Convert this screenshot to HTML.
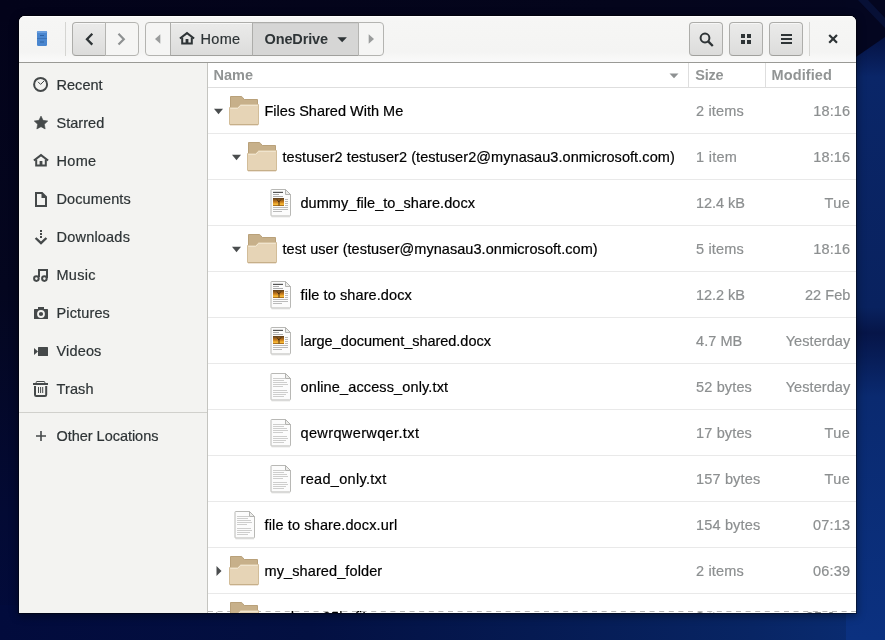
<!DOCTYPE html>
<html lang="en"><head><meta charset="utf-8"><title>OneDrive</title>
<style>
html,body{margin:0;padding:0;}
body{width:885px;height:640px;overflow:hidden;position:relative;background:#05061e;font-family:"Liberation Sans",sans-serif;font-size:14.5px;color:#2e3436;}
#bg{position:absolute;left:0;top:0;width:885px;height:640px;}
#win{will-change:transform;position:absolute;left:19px;top:16px;width:837px;height:597px;border-radius:6px 6px 0 0;overflow:hidden;background:#fff;
 box-shadow:0 0 0 1px rgba(0,0,0,.4),0 2px 8px 1px rgba(0,0,0,.4);}
#hdr{position:absolute;left:0;top:0;width:837px;height:46px;background:linear-gradient(to bottom,#f6f6f5 0%,#f4f4f3 78%,#fafafa 100%);border-bottom:1px solid #9a9a96;box-shadow:inset 0 1px #fff;}
#side{position:absolute;left:0;top:47px;width:188px;height:550px;background:#f3f3f1;border-right:1px solid #c4c4c0;}
#main{position:absolute;left:189px;top:47px;width:648px;height:550px;background:#fff;}
.t{position:absolute;white-space:pre;line-height:20px;height:20px;-webkit-text-stroke:.2px;}
.btn{position:absolute;top:6px;height:32px;border:1px solid #adadaa;border-bottom-color:#a0a09d;border-radius:4px;background:linear-gradient(to bottom,#ebebea,#dcdcdb);box-shadow:inset 0 1px rgba(255,255,255,.6);}
.flat{background:#f5f5f4;border-color:#b4b4b1;box-shadow:none;}
.act{background:#d6d6d5;box-shadow:inset 0 1px rgba(0,0,0,.04);}
.row{position:absolute;left:0;width:648px;height:45px;border-bottom:1px solid #e9e9e9;}
svg{position:absolute;left:0;top:0;overflow:visible;}
</style></head><body>

<svg id="bg" width="885" height="640" viewBox="0 0 885 640">
<defs>
<linearGradient id="gl" x1="0" y1="0" x2="0" y2="1"><stop offset="0" stop-color="#03031a"/><stop offset=".45" stop-color="#04061f"/><stop offset=".8" stop-color="#030a34"/><stop offset="1" stop-color="#020b3c"/></linearGradient>
<linearGradient id="g1" x1="0" y1="0" x2="0" y2="1"><stop offset="0" stop-color="#03051c"/><stop offset=".07" stop-color="#06164a"/><stop offset=".12" stop-color="#0a2668"/><stop offset=".48" stop-color="#09225f"/><stop offset=".52" stop-color="#061548"/><stop offset=".62" stop-color="#0a2a70"/><stop offset="1" stop-color="#0b3180"/></linearGradient>
<linearGradient id="g2" x1="0" y1="0" x2="1" y2="0"><stop offset="0" stop-color="#020b3c"/><stop offset=".35" stop-color="#031042"/><stop offset=".6" stop-color="#051a52"/><stop offset=".85" stop-color="#082564"/><stop offset="1" stop-color="#0a2d74"/></linearGradient>
<linearGradient id="gt" x1="0" y1="0" x2="1" y2="0"><stop offset="0" stop-color="#03031a"/><stop offset=".7" stop-color="#04051c"/><stop offset="1" stop-color="#040620"/></linearGradient>
</defs>
<rect width="885" height="640" fill="#04061f"/>
<rect x="0" y="0" width="30" height="640" fill="url(#gl)"/>
<rect x="0" y="605" width="885" height="35" fill="url(#g2)"/>
<rect x="846" y="0" width="39" height="640" fill="url(#g1)"/>
<rect x="0" y="0" width="885" height="22" fill="url(#gt)"/>
<polygon points="846,0 885,0 885,37 856,57 846,57" fill="#040620"/>
<polygon points="858,0 868,0 885,18 885,28" fill="#0a1c52" opacity=".45"/>
</svg>

<div id="win"><div id="hdr">
<div class="btn " style="left:53px;width:32px;border-radius:4px 0 0 4px;"></div>
<div class="btn flat" style="left:86px;width:32px;border-radius:0 4px 4px 0;"></div>
<div class="btn flat" style="left:126px;width:24px;border-radius:4px 0 0 4px;"></div>
<div class="btn " style="left:151px;width:81px;border-radius:0;"></div>
<div class="btn act" style="left:233px;width:105px;border-radius:0;"></div>
<div class="btn flat" style="left:339px;width:24px;border-radius:0 4px 4px 0;"></div>
<div class="btn " style="left:670px;width:32px;"></div>
<div class="btn " style="left:710px;width:32px;"></div>
<div class="btn " style="left:750px;width:32px;"></div>
<div style="position:absolute;left:46px;top:6px;width:1px;height:34px;background:#d5d5d2"></div>
<div style="position:absolute;left:790px;top:6px;width:1px;height:34px;background:#d5d5d2"></div>
<div class="t" style="top:13px;letter-spacing:0.303px;left:181.5px;">Home</div>
<div class="t" style="top:13px;letter-spacing:-0.123px;left:245.5px;font-weight:700;-webkit-text-stroke:0;">OneDrive</div>
</div>
<div id="side">
<div class="t" style="top:12px;letter-spacing:0.041px;left:37.5px;">Recent</div>
<div class="t" style="top:50px;letter-spacing:0.034px;left:37.5px;">Starred</div>
<div class="t" style="top:88px;letter-spacing:0.303px;left:37.5px;">Home</div>
<div class="t" style="top:126px;letter-spacing:0.106px;left:37.5px;">Documents</div>
<div class="t" style="top:164px;letter-spacing:0.206px;left:37.5px;">Downloads</div>
<div class="t" style="top:202px;letter-spacing:0.265px;left:37.5px;">Music</div>
<div class="t" style="top:240px;letter-spacing:0.139px;left:37.5px;">Pictures</div>
<div class="t" style="top:278px;letter-spacing:0.154px;left:37.5px;">Videos</div>
<div class="t" style="top:316px;letter-spacing:0.134px;left:37.5px;">Trash</div>
<div style="position:absolute;left:0;top:349px;width:188px;height:1px;background:#d0d0cc"></div>
<div class="t" style="top:363px;letter-spacing:-0.032px;left:37.5px;">Other Locations</div>
</div>
<div id="main">
<div style="position:absolute;left:0;top:0;width:648px;height:24px;border-bottom:1px solid #dedede;background:#fff"></div>
<div style="position:absolute;left:480px;top:0;width:1px;height:24px;background:#dedede"></div>
<div style="position:absolute;left:557px;top:0;width:1px;height:24px;background:#dedede"></div>
<div class="t" style="top:2px;letter-spacing:0.025px;left:5.5px;font-weight:700;-webkit-text-stroke:0;color:#919494;">Name</div>
<div class="t" style="top:2px;letter-spacing:-0.179px;left:487.20000000000005px;font-weight:700;-webkit-text-stroke:0;color:#919494;">Size</div>
<div class="t" style="top:2px;letter-spacing:0.111px;left:563.5px;font-weight:700;-webkit-text-stroke:0;color:#919494;">Modified</div>
<div class="row" style="top:25px"></div>
<div class="t" style="top:38px;letter-spacing:0.005px;left:56.5px;color:#000;">Files Shared With Me</div>
<div class="t" style="top:38px;letter-spacing:0.136px;left:488.1px;color:#8c8f90;">2 items</div>
<div class="t" style="top:38px;letter-spacing:0.161px;right:5.7000000000000455px;color:#8c8f90;">18:16</div>
<div class="row" style="top:71px"></div>
<div class="t" style="top:84px;letter-spacing:0.065px;left:74.5px;color:#000;">testuser2 testuser2 (testuser2@mynasau3.onmicrosoft.com)</div>
<div class="t" style="top:84px;letter-spacing:0.25px;left:488.1px;color:#8c8f90;">1 item</div>
<div class="t" style="top:84px;letter-spacing:0.161px;right:5.7000000000000455px;color:#8c8f90;">18:16</div>
<div class="row" style="top:117px"></div>
<div class="t" style="top:130px;letter-spacing:0.05px;left:92.5px;color:#000;">dummy_file_to_share.docx</div>
<div class="t" style="top:130px;letter-spacing:-0.053px;left:488.1px;color:#8c8f90;">12.4 kB</div>
<div class="t" style="top:130px;letter-spacing:0.416px;right:5.7000000000000455px;color:#8c8f90;">Tue</div>
<div class="row" style="top:163px"></div>
<div class="t" style="top:176px;letter-spacing:0.051px;left:74.5px;color:#000;">test user (testuser@mynasau3.onmicrosoft.com)</div>
<div class="t" style="top:176px;letter-spacing:0.136px;left:488.1px;color:#8c8f90;">5 items</div>
<div class="t" style="top:176px;letter-spacing:0.161px;right:5.7000000000000455px;color:#8c8f90;">18:16</div>
<div class="row" style="top:209px"></div>
<div class="t" style="top:222px;letter-spacing:0.099px;left:92.5px;color:#000;">file to share.docx</div>
<div class="t" style="top:222px;letter-spacing:-0.053px;left:488.1px;color:#8c8f90;">12.2 kB</div>
<div class="t" style="top:222px;letter-spacing:0.024px;right:5.7000000000000455px;color:#8c8f90;">22 Feb</div>
<div class="row" style="top:255px"></div>
<div class="t" style="top:268px;letter-spacing:-0.025px;left:92.5px;color:#000;">large_document_shared.docx</div>
<div class="t" style="top:268px;letter-spacing:0.044px;left:488.1px;color:#8c8f90;">4.7 MB</div>
<div class="t" style="top:268px;letter-spacing:0.081px;right:5.7000000000000455px;color:#8c8f90;">Yesterday</div>
<div class="row" style="top:301px"></div>
<div class="t" style="top:314px;letter-spacing:0.131px;left:92.5px;color:#000;">online_access_only.txt</div>
<div class="t" style="top:314px;letter-spacing:0.134px;left:488.1px;color:#8c8f90;">52 bytes</div>
<div class="t" style="top:314px;letter-spacing:0.081px;right:5.7000000000000455px;color:#8c8f90;">Yesterday</div>
<div class="row" style="top:347px"></div>
<div class="t" style="top:360px;letter-spacing:0.373px;left:92.5px;color:#000;">qewrqwerwqer.txt</div>
<div class="t" style="top:360px;letter-spacing:0.134px;left:488.1px;color:#8c8f90;">17 bytes</div>
<div class="t" style="top:360px;letter-spacing:0.416px;right:5.7000000000000455px;color:#8c8f90;">Tue</div>
<div class="row" style="top:393px"></div>
<div class="t" style="top:406px;letter-spacing:0.311px;left:92.5px;color:#000;">read_only.txt</div>
<div class="t" style="top:406px;letter-spacing:0.145px;left:488.1px;color:#8c8f90;">157 bytes</div>
<div class="t" style="top:406px;letter-spacing:0.416px;right:5.7000000000000455px;color:#8c8f90;">Tue</div>
<div class="row" style="top:439px"></div>
<div class="t" style="top:452px;letter-spacing:0.138px;left:56.5px;color:#000;">file to share.docx.url</div>
<div class="t" style="top:452px;letter-spacing:0.145px;left:488.1px;color:#8c8f90;">154 bytes</div>
<div class="t" style="top:452px;letter-spacing:0.221px;right:5.7000000000000455px;color:#8c8f90;">07:13</div>
<div class="row" style="top:485px"></div>
<div class="t" style="top:498px;letter-spacing:0.108px;left:56.5px;color:#000;">my_shared_folder</div>
<div class="t" style="top:498px;letter-spacing:0.136px;left:488.1px;color:#8c8f90;">2 items</div>
<div class="t" style="top:498px;letter-spacing:0.221px;right:5.7000000000000455px;color:#8c8f90;">06:39</div>
<div class="row" style="top:531px"></div>
<div class="t" style="top:544px;letter-spacing:0.158px;left:56.5px;color:#000;">random_25k_files</div>
<div class="t" style="top:544px;letter-spacing:0.136px;left:488.1px;color:#8c8f90;">3 items</div>
<div class="t" style="top:544px;letter-spacing:0.159px;right:5.7000000000000455px;color:#8c8f90;">25 Jan</div>
<svg width="648" height="1" style="left:0;top:548px"><line x1="0" y1=".5" x2="648" y2=".5" stroke="#b9b9b9" stroke-width="1" stroke-dasharray="5 4.6"/></svg>
</div>
<svg width="837" height="597" viewBox="19 16 837 597">
<defs><linearGradient id="sun" x1="0" y1="0" x2="0" y2="1"><stop offset="0" stop-color="#5a3c1c"/><stop offset=".5" stop-color="#c97c1c"/><stop offset=".8" stop-color="#fbbf3a"/><stop offset="1" stop-color="#8a4f12"/></linearGradient></defs>
<g><rect x="37" y="31" width="10" height="15" rx="1.2" fill="#4a86cf"/><rect x="37" y="31" width="10" height="2" rx="1" fill="#6a9ede"/><rect x="37" y="38" width="10" height="1" fill="#3b73b8"/><rect x="40" y="35" width="4" height="1" fill="#2f62a3"/><rect x="40" y="41.5" width="4" height="1" fill="#2f62a3"/></g>
<path d="M92.3 33.8 L87 39.2 L92.3 44.6" fill="none" stroke="#2e3436" stroke-width="2.3"/>
<path d="M118.5 33.8 L123.8 39.2 L118.5 44.6" fill="none" stroke="#8e9192" stroke-width="2.2"/>
<path d="M160.3 34.3 L160.3 43.8 L155 39 Z" fill="#9a9c9c"/>
<path d="M368.7 34.3 L368.7 43.8 L374 39 Z" fill="#9a9c9c"/>
<g transform="translate(179,31)" fill="none" stroke="#2e3436" stroke-width="2"><path d="M0.9 7.5 L8 2.1 L15.1 7.5" stroke-linejoin="miter"/><path d="M3.2 6.6 L3.2 12.6 L12.8 12.6 L12.8 6.6"/><rect x="6.6" y="8" width="2.8" height="4.6" fill="#2e3436" stroke="none"/></g>
<path d="M337.4 37.2 L346.9 37.2 L342.15 42.2 Z" fill="#2e3436"/>
<circle cx="705" cy="38" r="4.4" fill="none" stroke="#2e3436" stroke-width="2"/><path d="M708.2 41.4 L712.8 46" stroke="#2e3436" stroke-width="2.4"/>
<rect x="741" y="34" width="4" height="4" fill="#2e3436"/>
<rect x="741" y="40" width="4" height="4" fill="#2e3436"/>
<rect x="747" y="34" width="4" height="4" fill="#2e3436"/>
<rect x="747" y="40" width="4" height="4" fill="#2e3436"/>
<rect x="781" y="34" width="11" height="2" fill="#2e3436"/>
<rect x="781" y="38" width="11" height="2" fill="#2e3436"/>
<rect x="781" y="42" width="11" height="2" fill="#2e3436"/>
<path d="M829.2 35 L837 42.8 M837 35 L829.2 42.8" stroke="#2e3436" stroke-width="2.2"/>
<path d="M669.5 73.5 L678.5 73.5 L674 78.3 Z" fill="#8e9192"/>
<circle cx="40.6" cy="84.4" r="6.5" fill="none" stroke="#45494a" stroke-width="2"/><path d="M38 81.8 L40.6 84.4 L44 81" fill="none" stroke="#45494a" stroke-width="1"/>
<polygon points="41.00,116.10 43.06,120.37 47.75,121.01 44.33,124.28 45.17,128.94 41.00,126.70 36.83,128.94 37.67,124.28 34.25,121.01 38.94,120.37" fill="#45494a" stroke="#45494a" stroke-width=".6" stroke-linejoin="round"/>
<g transform="translate(33,153)" fill="none" stroke="#45494a" stroke-width="2"><path d="M0.9 7.5 L8 2.1 L15.1 7.5" stroke-linejoin="miter"/><path d="M3.2 6.6 L3.2 12.6 L12.8 12.6 L12.8 6.6"/><rect x="6.6" y="8" width="2.8" height="4.6" fill="#45494a" stroke="none"/></g>
<path d="M36 193 L42 193 L46 197 L46 206 L36 206 Z" fill="none" stroke="#45494a" stroke-width="2"/><path d="M41.5 192.5 L41.5 198 L47 198 Z" fill="#45494a"/>
<rect x="40" y="230" width="2" height="2" fill="#45494a"/>
<rect x="40" y="233" width="2" height="2" fill="#45494a"/>
<rect x="40" y="236" width="2" height="2" fill="#45494a"/>
<path d="M35.6 238 L41 243.2 L46.4 238" fill="none" stroke="#45494a" stroke-width="2.4"/>
<path d="M39 277 L39 270 L47 270 L47 278" fill="none" stroke="#45494a" stroke-width="2"/><circle cx="36.4" cy="278.6" r="2.3" fill="none" stroke="#45494a" stroke-width="2"/><circle cx="44.4" cy="278.6" r="2.3" fill="none" stroke="#45494a" stroke-width="2"/>
<rect x="34" y="309" width="14" height="10" rx=".6" fill="#45494a"/><rect x="38" y="307" width="6" height="3" fill="#45494a"/><circle cx="41" cy="314" r="3" fill="#45494a" stroke="#f3f3f1" stroke-width="1.8"/>
<rect x="38" y="347" width="10" height="9" rx=".5" fill="#45494a"/><path d="M34 348 L38 351.5 L34 355 Z" fill="#45494a"/>
<rect x="33" y="383" width="15" height="2" fill="#45494a"/><path d="M36.2 383 L36.2 382.3 Q36.2 381.5 37 381.5 L44 381.5 Q44.8 381.5 44.8 382.3 L44.8 383" fill="none" stroke="#45494a" stroke-width="1"/><path d="M35 386 L35 394.8 Q35 396 36.2 396 L45 396 Q46.2 396 46.2 394.8 L46.2 386" fill="none" stroke="#45494a" stroke-width="2"/><path d="M38.5 387 V393 M40.6 387 V393 M42.7 387 V393" stroke="#45494a" stroke-width="1"/>
<path d="M36 436 H46 M41 431 V441" stroke="#45494a" stroke-width="1.6"/>
<g transform="translate(228,94)"><path d="M2.5 2.5 L13 2.5 Q14 2.5 14.6 3.4 L16.2 5.5 L29.5 5.5 L29.5 20 L2.5 20 Z" fill="#c7b08a" stroke="#b9a17a" stroke-width="1"/><path d="M1.5 13.5 L9.5 13.5 L12.5 10.5 L30.5 10.5 L30.5 30 Q30.5 30.8 29.7 30.8 L2.3 30.8 Q1.5 30.8 1.5 30 Z" fill="#e6d4b6" stroke="#d2bd99" stroke-width="1"/><path d="M2.2 14.3 L9.8 14.3 L12.8 11.3 L29.8 11.3" fill="none" stroke="#f3e8d4" stroke-width="1"/><path d="M2 30.6 L30 30.6" stroke="#c4ad86" stroke-width="1"/></g>
<path d="M214.0 108.7 L223.0 108.7 L218.5 114.3 Z" fill="#4a4d4e"/>
<g transform="translate(246,140)"><path d="M2.5 2.5 L13 2.5 Q14 2.5 14.6 3.4 L16.2 5.5 L29.5 5.5 L29.5 20 L2.5 20 Z" fill="#c7b08a" stroke="#b9a17a" stroke-width="1"/><path d="M1.5 13.5 L9.5 13.5 L12.5 10.5 L30.5 10.5 L30.5 30 Q30.5 30.8 29.7 30.8 L2.3 30.8 Q1.5 30.8 1.5 30 Z" fill="#e6d4b6" stroke="#d2bd99" stroke-width="1"/><path d="M2.2 14.3 L9.8 14.3 L12.8 11.3 L29.8 11.3" fill="none" stroke="#f3e8d4" stroke-width="1"/><path d="M2 30.6 L30 30.6" stroke="#c4ad86" stroke-width="1"/></g>
<path d="M232.0 154.7 L241.0 154.7 L236.5 160.3 Z" fill="#4a4d4e"/>
<g transform="translate(270,189)"><path d="M1 1.2 Q1 .5 1.7 .5 L15.5 .5 L20.5 5.5 L20.5 26.3 Q20.5 27 19.8 27 L1.7 27 Q1 27 1 26.3 Z" fill="#fcfcfc" stroke="#b8b8b5" stroke-width="1"/><path d="M15.5 .5 L15.5 5.5 L20.5 5.5 Z" fill="#ececea" stroke="#b3b3b0" stroke-width="1" stroke-linejoin="round"/><path d="M1.5 27.8 H20" stroke="#d9d9d7" stroke-width="1"/><rect x="3" y="2.8" width="10" height="1.2" fill="#555"/><rect x="3" y="5" width="6" height=".8" fill="#999"/><rect x="3" y="7" width="10" height=".8" fill="#999"/><rect x="3" y="9" width="11" height="8" fill="url(#sun)"/><path d="M9 16.5 L9 12 M9 13 L7 10.5 M9 12.5 L11 10.5" stroke="#3a2510" stroke-width=".9" fill="none"/><rect x="15" y="10" width="3" height=".8" fill="#aaa"/><rect x="15" y="12" width="3" height=".8" fill="#aaa"/><rect x="15" y="14" width="3" height=".8" fill="#aaa"/><rect x="15" y="16" width="3" height=".8" fill="#aaa"/><rect x="3" y="18.2" width="15" height=".8" fill="#aaa"/><rect x="3" y="20.2" width="15" height=".8" fill="#aaa"/><rect x="3" y="22.2" width="9" height=".8" fill="#aaa"/></g>
<g transform="translate(246,232)"><path d="M2.5 2.5 L13 2.5 Q14 2.5 14.6 3.4 L16.2 5.5 L29.5 5.5 L29.5 20 L2.5 20 Z" fill="#c7b08a" stroke="#b9a17a" stroke-width="1"/><path d="M1.5 13.5 L9.5 13.5 L12.5 10.5 L30.5 10.5 L30.5 30 Q30.5 30.8 29.7 30.8 L2.3 30.8 Q1.5 30.8 1.5 30 Z" fill="#e6d4b6" stroke="#d2bd99" stroke-width="1"/><path d="M2.2 14.3 L9.8 14.3 L12.8 11.3 L29.8 11.3" fill="none" stroke="#f3e8d4" stroke-width="1"/><path d="M2 30.6 L30 30.6" stroke="#c4ad86" stroke-width="1"/></g>
<path d="M232.0 246.7 L241.0 246.7 L236.5 252.3 Z" fill="#4a4d4e"/>
<g transform="translate(270,281)"><path d="M1 1.2 Q1 .5 1.7 .5 L15.5 .5 L20.5 5.5 L20.5 26.3 Q20.5 27 19.8 27 L1.7 27 Q1 27 1 26.3 Z" fill="#fcfcfc" stroke="#b8b8b5" stroke-width="1"/><path d="M15.5 .5 L15.5 5.5 L20.5 5.5 Z" fill="#ececea" stroke="#b3b3b0" stroke-width="1" stroke-linejoin="round"/><path d="M1.5 27.8 H20" stroke="#d9d9d7" stroke-width="1"/><rect x="3" y="2.8" width="10" height="1.2" fill="#555"/><rect x="3" y="5" width="6" height=".8" fill="#999"/><rect x="3" y="7" width="10" height=".8" fill="#999"/><rect x="3" y="9" width="11" height="8" fill="url(#sun)"/><path d="M9 16.5 L9 12 M9 13 L7 10.5 M9 12.5 L11 10.5" stroke="#3a2510" stroke-width=".9" fill="none"/><rect x="15" y="10" width="3" height=".8" fill="#aaa"/><rect x="15" y="12" width="3" height=".8" fill="#aaa"/><rect x="15" y="14" width="3" height=".8" fill="#aaa"/><rect x="15" y="16" width="3" height=".8" fill="#aaa"/><rect x="3" y="18.2" width="15" height=".8" fill="#aaa"/><rect x="3" y="20.2" width="15" height=".8" fill="#aaa"/><rect x="3" y="22.2" width="9" height=".8" fill="#aaa"/></g>
<g transform="translate(270,327)"><path d="M1 1.2 Q1 .5 1.7 .5 L15.5 .5 L20.5 5.5 L20.5 26.3 Q20.5 27 19.8 27 L1.7 27 Q1 27 1 26.3 Z" fill="#fcfcfc" stroke="#b8b8b5" stroke-width="1"/><path d="M15.5 .5 L15.5 5.5 L20.5 5.5 Z" fill="#ececea" stroke="#b3b3b0" stroke-width="1" stroke-linejoin="round"/><path d="M1.5 27.8 H20" stroke="#d9d9d7" stroke-width="1"/><rect x="3" y="2.8" width="10" height="1.2" fill="#555"/><rect x="3" y="5" width="6" height=".8" fill="#999"/><rect x="3" y="7" width="10" height=".8" fill="#999"/><rect x="3" y="9" width="11" height="8" fill="url(#sun)"/><path d="M9 16.5 L9 12 M9 13 L7 10.5 M9 12.5 L11 10.5" stroke="#3a2510" stroke-width=".9" fill="none"/><rect x="15" y="10" width="3" height=".8" fill="#aaa"/><rect x="15" y="12" width="3" height=".8" fill="#aaa"/><rect x="15" y="14" width="3" height=".8" fill="#aaa"/><rect x="15" y="16" width="3" height=".8" fill="#aaa"/><rect x="3" y="18.2" width="15" height=".8" fill="#aaa"/><rect x="3" y="20.2" width="15" height=".8" fill="#aaa"/><rect x="3" y="22.2" width="9" height=".8" fill="#aaa"/></g>
<g transform="translate(270,373)"><path d="M1 1.2 Q1 .5 1.7 .5 L15.5 .5 L20.5 5.5 L20.5 26.3 Q20.5 27 19.8 27 L1.7 27 Q1 27 1 26.3 Z" fill="#fcfcfc" stroke="#b8b8b5" stroke-width="1"/><path d="M15.5 .5 L15.5 5.5 L20.5 5.5 Z" fill="#ececea" stroke="#b3b3b0" stroke-width="1" stroke-linejoin="round"/><path d="M1.5 27.8 H20" stroke="#d9d9d7" stroke-width="1"/><rect x="3" y="5.1" width="12" height=".8" fill="#c2c2c0"/><rect x="3" y="7.1" width="11" height=".8" fill="#c2c2c0"/><rect x="3" y="9.1" width="14" height=".8" fill="#c2c2c0"/><rect x="3" y="11.1" width="15" height=".8" fill="#c2c2c0"/><rect x="3" y="13.1" width="10" height=".8" fill="#c2c2c0"/><rect x="3" y="17.1" width="14" height=".8" fill="#c2c2c0"/><rect x="3" y="19.1" width="15" height=".8" fill="#c2c2c0"/><rect x="3" y="21.1" width="13" height=".8" fill="#c2c2c0"/><rect x="3" y="23.1" width="11" height=".8" fill="#c2c2c0"/></g>
<g transform="translate(270,419)"><path d="M1 1.2 Q1 .5 1.7 .5 L15.5 .5 L20.5 5.5 L20.5 26.3 Q20.5 27 19.8 27 L1.7 27 Q1 27 1 26.3 Z" fill="#fcfcfc" stroke="#b8b8b5" stroke-width="1"/><path d="M15.5 .5 L15.5 5.5 L20.5 5.5 Z" fill="#ececea" stroke="#b3b3b0" stroke-width="1" stroke-linejoin="round"/><path d="M1.5 27.8 H20" stroke="#d9d9d7" stroke-width="1"/><rect x="3" y="5.1" width="12" height=".8" fill="#c2c2c0"/><rect x="3" y="7.1" width="11" height=".8" fill="#c2c2c0"/><rect x="3" y="9.1" width="14" height=".8" fill="#c2c2c0"/><rect x="3" y="11.1" width="15" height=".8" fill="#c2c2c0"/><rect x="3" y="13.1" width="10" height=".8" fill="#c2c2c0"/><rect x="3" y="17.1" width="14" height=".8" fill="#c2c2c0"/><rect x="3" y="19.1" width="15" height=".8" fill="#c2c2c0"/><rect x="3" y="21.1" width="13" height=".8" fill="#c2c2c0"/><rect x="3" y="23.1" width="11" height=".8" fill="#c2c2c0"/></g>
<g transform="translate(270,465)"><path d="M1 1.2 Q1 .5 1.7 .5 L15.5 .5 L20.5 5.5 L20.5 26.3 Q20.5 27 19.8 27 L1.7 27 Q1 27 1 26.3 Z" fill="#fcfcfc" stroke="#b8b8b5" stroke-width="1"/><path d="M15.5 .5 L15.5 5.5 L20.5 5.5 Z" fill="#ececea" stroke="#b3b3b0" stroke-width="1" stroke-linejoin="round"/><path d="M1.5 27.8 H20" stroke="#d9d9d7" stroke-width="1"/><rect x="3" y="5.1" width="12" height=".8" fill="#c2c2c0"/><rect x="3" y="7.1" width="11" height=".8" fill="#c2c2c0"/><rect x="3" y="9.1" width="14" height=".8" fill="#c2c2c0"/><rect x="3" y="11.1" width="15" height=".8" fill="#c2c2c0"/><rect x="3" y="13.1" width="10" height=".8" fill="#c2c2c0"/><rect x="3" y="17.1" width="14" height=".8" fill="#c2c2c0"/><rect x="3" y="19.1" width="15" height=".8" fill="#c2c2c0"/><rect x="3" y="21.1" width="13" height=".8" fill="#c2c2c0"/><rect x="3" y="23.1" width="11" height=".8" fill="#c2c2c0"/></g>
<g transform="translate(234,511)"><path d="M1 1.2 Q1 .5 1.7 .5 L15.5 .5 L20.5 5.5 L20.5 26.3 Q20.5 27 19.8 27 L1.7 27 Q1 27 1 26.3 Z" fill="#fcfcfc" stroke="#b8b8b5" stroke-width="1"/><path d="M15.5 .5 L15.5 5.5 L20.5 5.5 Z" fill="#ececea" stroke="#b3b3b0" stroke-width="1" stroke-linejoin="round"/><path d="M1.5 27.8 H20" stroke="#d9d9d7" stroke-width="1"/><rect x="3" y="5.1" width="12" height=".8" fill="#c2c2c0"/><rect x="3" y="7.1" width="11" height=".8" fill="#c2c2c0"/><rect x="3" y="9.1" width="14" height=".8" fill="#c2c2c0"/><rect x="3" y="11.1" width="15" height=".8" fill="#c2c2c0"/><rect x="3" y="13.1" width="10" height=".8" fill="#c2c2c0"/><rect x="3" y="17.1" width="14" height=".8" fill="#c2c2c0"/><rect x="3" y="19.1" width="15" height=".8" fill="#c2c2c0"/><rect x="3" y="21.1" width="13" height=".8" fill="#c2c2c0"/><rect x="3" y="23.1" width="11" height=".8" fill="#c2c2c0"/></g>
<g transform="translate(228,554)"><path d="M2.5 2.5 L13 2.5 Q14 2.5 14.6 3.4 L16.2 5.5 L29.5 5.5 L29.5 20 L2.5 20 Z" fill="#c7b08a" stroke="#b9a17a" stroke-width="1"/><path d="M1.5 13.5 L9.5 13.5 L12.5 10.5 L30.5 10.5 L30.5 30 Q30.5 30.8 29.7 30.8 L2.3 30.8 Q1.5 30.8 1.5 30 Z" fill="#e6d4b6" stroke="#d2bd99" stroke-width="1"/><path d="M2.2 14.3 L9.8 14.3 L12.8 11.3 L29.8 11.3" fill="none" stroke="#f3e8d4" stroke-width="1"/><path d="M2 30.6 L30 30.6" stroke="#c4ad86" stroke-width="1"/></g>
<path d="M216.5 566.1 L216.5 575.9 L221.5 571 Z" fill="#4a4d4e"/>
<g transform="translate(228,600)"><path d="M2.5 2.5 L13 2.5 Q14 2.5 14.6 3.4 L16.2 5.5 L29.5 5.5 L29.5 20 L2.5 20 Z" fill="#c7b08a" stroke="#b9a17a" stroke-width="1"/><path d="M1.5 13.5 L9.5 13.5 L12.5 10.5 L30.5 10.5 L30.5 30 Q30.5 30.8 29.7 30.8 L2.3 30.8 Q1.5 30.8 1.5 30 Z" fill="#e6d4b6" stroke="#d2bd99" stroke-width="1"/><path d="M2.2 14.3 L9.8 14.3 L12.8 11.3 L29.8 11.3" fill="none" stroke="#f3e8d4" stroke-width="1"/><path d="M2 30.6 L30 30.6" stroke="#c4ad86" stroke-width="1"/></g>
<path d="M216.5 612.1 L216.5 621.9 L221.5 617 Z" fill="#4a4d4e"/>
</svg>
</div></body></html>
